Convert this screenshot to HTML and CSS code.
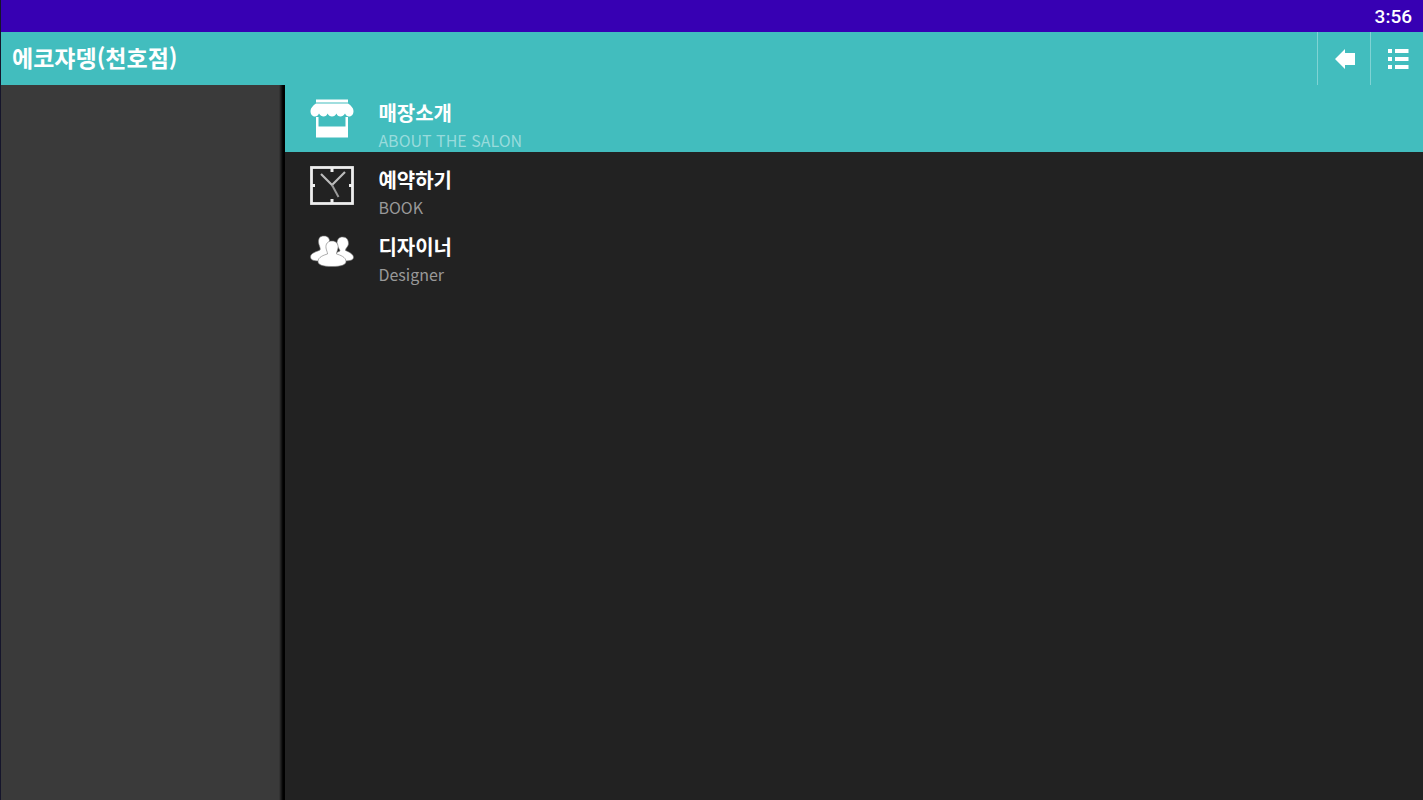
FILE: index.html
```html
<!DOCTYPE html>
<html lang="ko">
<head>
    <meta charset="UTF-8">
    <meta name="viewport" content="width=device-width, initial-scale=1.0">
    <title>에코쟈뎅(천호점)</title>
    <link rel="stylesheet" href="styles.css">
</head>
<body>
    <div class="status-bar">
        <time class="clock">3:56</time>
    </div>

    <header class="app-bar">
        <h1>에코쟈뎅(천호점)</h1>
        <button type="button" class="bar-button" aria-label="뒤로">
            <svg width="24" height="24" viewBox="0 0 24 24">
                <path d="M1 12L11 2V6H21V18H11V22Z" fill="#fff"/>
            </svg>
        </button>
        <button type="button" class="bar-button" aria-label="메뉴">
            <svg width="24" height="24" viewBox="0 0 24 24">
                <path d="M1 2H5V6H1ZM8 2H21.500V6H8ZM1 10H5V14H1ZM8 10H21.500V14H8ZM1 18H5V22H1ZM8 18H21.500V22H8Z" fill="#fff"/>
            </svg>
        </button>
    </header>

    <div class="content">
        <main class="page"></main>

        <nav class="menu">
            <a href="#about" class="menu-item active">
                <svg class="menu-icon" width="44" height="40" viewBox="0 0 44 40">
                    <path d="M6 1.500H38V4.500H6Z" fill="#fff"/>
                    <path d="M6 5.500H38C41 7.500 43.500 10 43.500 13C43.500 16 42 18.500 39 18.500C37 18.500 36 17.500 35 15.500C34 17.500 32 18.500 30.500 18.500C28.500 18.500 27 17.500 26.500 15.500C25.500 17.500 24 18.500 22 18.500C20 18.500 18.500 17.500 17.500 15.500C17 17.500 15.500 18.500 13.500 18.500C12 18.500 10 17.500 9 15.500C8 17.500 7 18.500 5 18.500C2 18.500 0.500 16 0.500 13C0.500 10 3 7.500 6 5.500Z" fill="#fff"/>
                    <path d="M6 19H8.500V28.500H35.500V19H38V39.500H6Z" fill="#fff"/>
                </svg>
                <span class="menu-text">
                    <strong>매장소개</strong>
                    <small>ABOUT THE SALON</small>
                </span>
            </a>
            <a href="#book" class="menu-item">
                <svg class="menu-icon" width="44" height="40" viewBox="0 0 44 40">
                    <rect x="1.500" y="2.500" width="41" height="36" fill="none" stroke="#eee" stroke-width="2.800"/>
                    <path d="M22 3V7M22 38V34M2 20.500H5M42 20.500H39" stroke="#eee" stroke-width="3"/>
                    <path d="M11 9L22 20L35 7" fill="none" stroke="#bbb" stroke-width="2.200"/>
                    <path d="M22 20L28.500 32" stroke="#999" stroke-width="2"/>
                </svg>
                <span class="menu-text">
                    <strong>예약하기</strong>
                    <small>BOOK</small>
                </span>
            </a>
            <a href="#designer" class="menu-item">
                <svg class="menu-icon" width="44" height="40" viewBox="0 0 44 40">
                    <g fill="#fff" stroke="#777" stroke-width="0.600">
                        <path d="M14 4C18.500 4 20 7 19.500 11C19 13 18 15 18 17C20 19 24 21 24 25C24 28 16 29 9 29C4 29 0.500 28 0.500 25C0.500 21 6 20 10 18C11 16 8.500 13 8.500 10C8.500 6 10 4 14 4Z"/>
                        <path d="M32.500 5C37 5 38.500 8 38.500 12C38 15 35.500 16 35.500 18.500C39 20 43.500 22 43.500 25.500C43.500 28 40 29 34 29H20C20 24 25 21 30 19C30 17 27 15 27 11.500C27 7.500 29 5 32.500 5Z"/>
                        <path d="M22 9C26.500 9 28.500 12 28 16C27.500 19 26.500 20 26.500 22C30 23 36 25 36 29.500C36 33 31 34.500 22 34.500C13 34.500 8 33 8 29.500C8 25 14 23 17.500 22C17.500 20 16.500 19 16 16C15.500 12 17.500 9 22 9Z"/>
                    </g>
                </svg>
                <span class="menu-text">
                    <strong>디자이너</strong>
                    <small>Designer</small>
                </span>
            </a>
        </nav>
    </div>
</body>
</html>
```

FILE: styles.css
```css
:root {
    --teal: #42bdbe;
    --purple: #3700b3;
    --menu-bg: #222;
    --page-bg: #3a3a3a;
}

* {
    margin: 0;
    padding: 0;
    box-sizing: border-box;
}

body {
    min-height: 100vh;
    display: flex;
    flex-direction: column;
    background: var(--menu-bg);
    border-left: 1px solid #15152b;
    font-family: "Noto Sans CJK KR", "Noto Sans", sans-serif;
    color: #fff;
}

.status-bar {
    height: 32px;
    display: flex;
    justify-content: flex-end;
    align-items: center;
    padding: 2px 11px 0;
    background: var(--purple);
}

.clock {
    font-family: Roboto, sans-serif;
    font-size: 19px;
    font-weight: 500;
    line-height: 24px;
}

.app-bar {
    height: 53px;
    display: flex;
    align-items: stretch;
    background: var(--teal);
}

.app-bar h1 {
    flex: 1;
    padding-left: 11px;
    font-size: 23px;
    font-weight: 700;
    line-height: 50px;
}

.bar-button {
    width: 53px;
    display: flex;
    justify-content: center;
    align-items: center;
    padding-left: 3px;
    background: none;
    border: none;
    border-left: 1px solid #80d3d4;
    cursor: pointer;
}

.content {
    flex: 1;
    display: flex;
}

.page {
    width: 20%;
    background: linear-gradient(to left, #000 2px, transparent 6px), var(--page-bg);
}

.menu {
    flex: 1;
}

.menu-item {
    height: 67px;
    display: flex;
    gap: 24px;
    padding: 13px 25px 0;
    color: #fff;
    text-decoration: none;
}

.menu-item.active {
    background: var(--teal);
}

.menu-text {
    display: flex;
    flex-direction: column;
}

.menu-text strong {
    font-size: 20px;
    font-weight: 700;
    line-height: 29px;
}

.menu-text small {
    font-size: 16px;
    line-height: 26px;
    color: #999;
}

.active small {
    color: #98dbdc;
}
```
